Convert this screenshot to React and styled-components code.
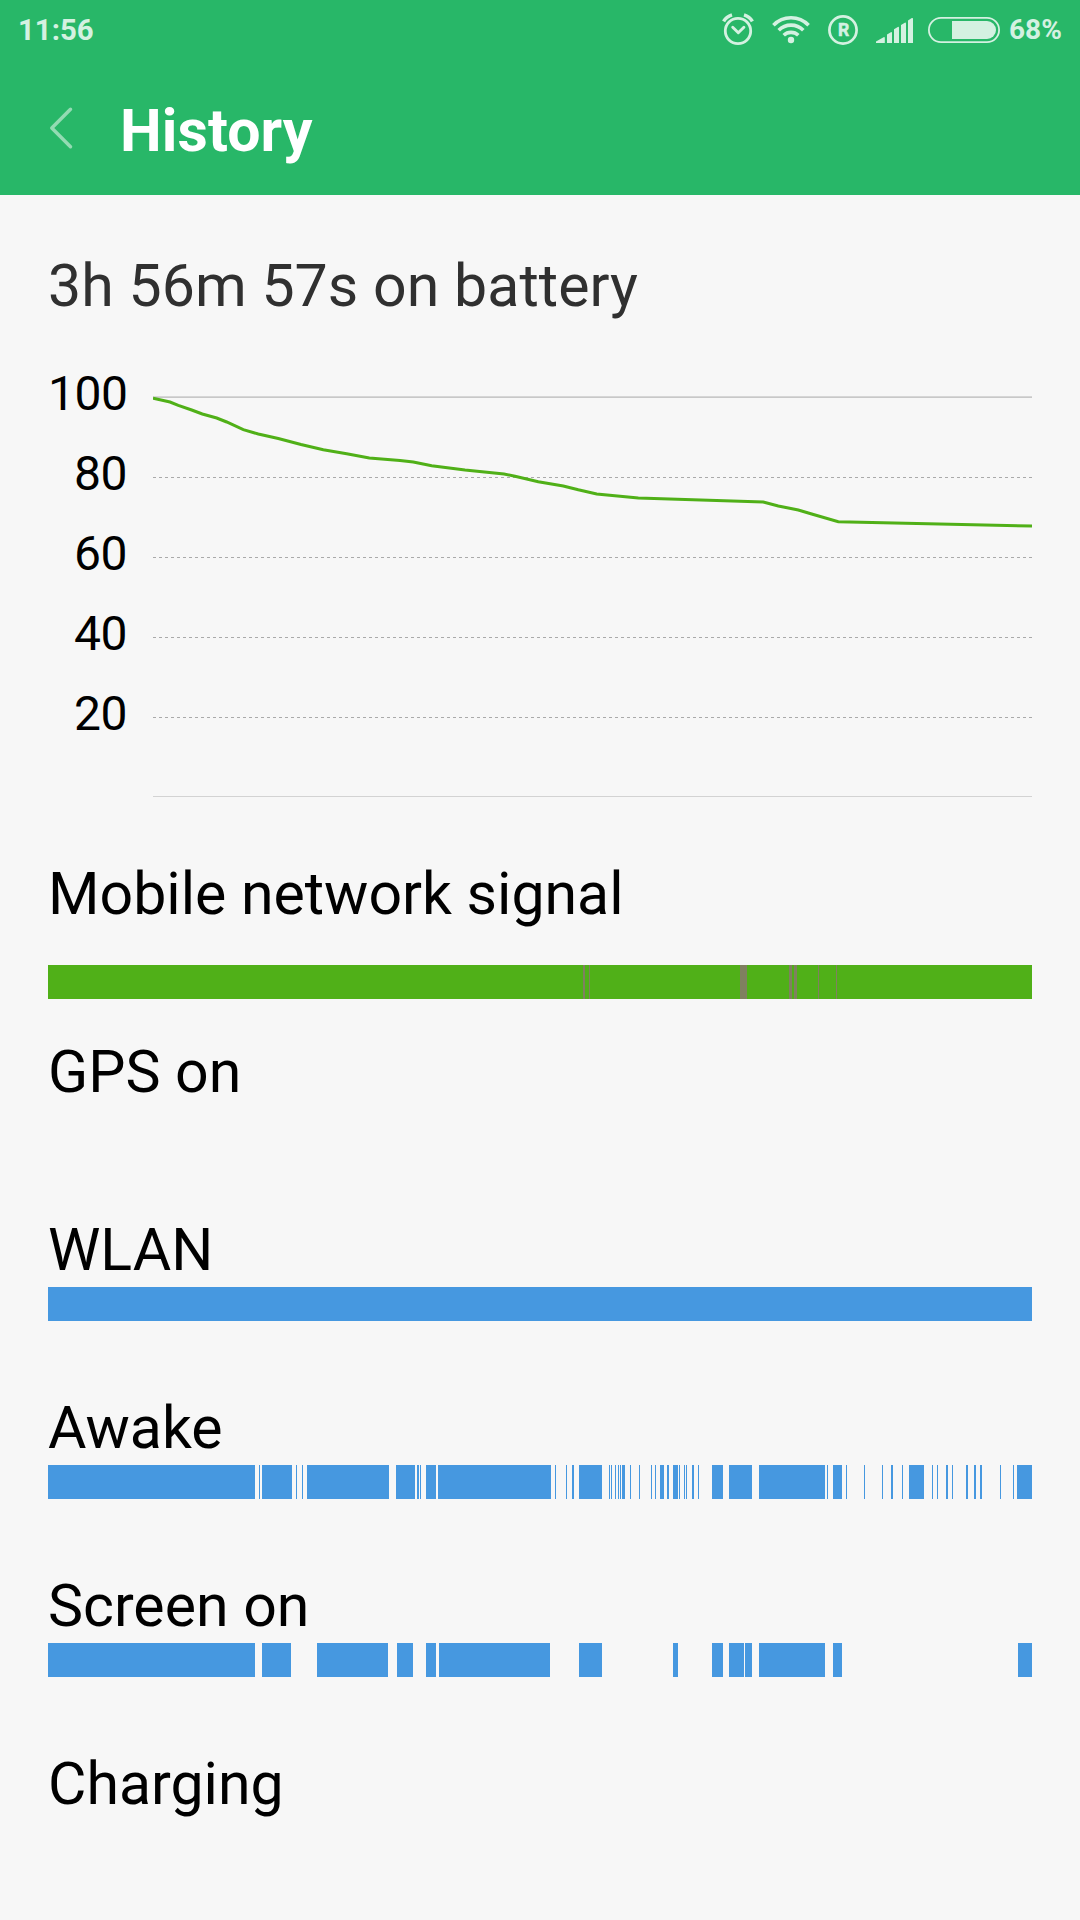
import React from 'react';
import styled, { createGlobalStyle } from 'styled-components';

const GlobalStyle = createGlobalStyle`
  html, body { margin: 0; padding: 0; background: #f7f7f7; }
  body { font-family: Roboto, "Noto Sans", sans-serif; }
`;

const Screen = styled.main`
  width: 1080px;
  height: 1920px;
  overflow: hidden;
  background: #f7f7f7;
  color: #000;
`;

const Header = styled.header`
  height: 195px;
  background: #28b768;
`;

const StatusBar = styled.div`
  height: 60px;
  box-sizing: border-box;
  padding: 0 19px 0 18px;
  display: flex;
  align-items: center;
  color: #d4f1e1;
  font-weight: 700;
  line-height: 60px;
`;

const Clock = styled.span`
  flex: 1;
  font-size: 29.4px;
`;

const Percentage = styled.span`
  flex: none;
  width: 52px;
  font-size: 28px;
  white-space: nowrap;
`;

const StatusIcon = styled.svg`
  display: block;
  flex: none;
  margin-right: ${(p) => p.$gap}px;
  font-family: Roboto, sans-serif;
  font-weight: 700;
`;

const TitleBar = styled.div`
  height: 135px;
  display: flex;
  align-items: flex-start;
  padding: 35px 0 0 48px;
  box-sizing: border-box;
`;

const BackButton = styled.button`
  border: 0;
  padding: 0;
  margin: 10px 45px 0 0;
  background: none;
  svg { display: block; }
`;

const Title = styled.h1`
  margin: 0;
  color: #fff;
  font-size: 59px;
  letter-spacing: 0.1px;
  line-height: 71px;
  font-weight: 700;
`;

const Content = styled.section`
  padding: 55px 48px 0;
`;

const Summary = styled.h2`
  margin: 0 0 33px;
  font-size: 59px;
  letter-spacing: 0.06px;
  line-height: 71px;
  font-weight: 400;
  color: #303030;
`;

const Chart = styled.div`
  display: flex;
  height: 446px;
  margin-bottom: 58px;
`;

const Axis = styled.div`
  width: 79px;
  margin-right: 26px;
  text-align: right;
`;

const AxisLabel = styled.div`
  font-size: 48px;
  letter-spacing: -0.5px;
  line-height: 80px;
  height: 80px;
`;

const Plot = styled.svg`
  display: block;
  margin-top: 40px;
`;

const Row = styled.div`
  height: 178px;
`;

const RowLabel = styled.div`
  font-size: 59px;
  line-height: 71px;
  white-space: nowrap;
`;

const Track = styled.div`
  display: flex;
  height: 34px;
  margin-top: ${(p) => p.$offset}px;
  background: ${(p) => p.$fill || 'transparent'};
`;

const Segment = styled.span`
  flex: none;
  height: 34px;
  background: ${(p) => p.$color};
`;

const BLUE = '#4698e0';
const GREEN = '#50b018';

const LEVELS = [
  [153, 398.2], [170, 402], [178.3, 405.3], [191.7, 410], [202.3, 414], [216.7, 418],
  [226.7, 422], [243.3, 429.7], [258.3, 434], [278.3, 438.5], [301, 444.5], [323.3, 449.8],
  [346.7, 453.7], [369.3, 457.9], [400, 460.5], [413.3, 462], [431.7, 465.8], [465, 470],
  [504, 474], [515, 476.3], [538.3, 481.8], [563.3, 486], [578.3, 489.8], [596.7, 494],
  [638.3, 497.9], [763.3, 502], [778.3, 506], [798.3, 510], [811.7, 514], [838.3, 521.8],
  [1032, 526],
];

const SIGNAL_GAPS = [
  [583, 585], [589, 590], [740, 747], [789, 792], [794, 797], [818, 819], [836, 837],
];

const AWAKE = [
  [48, 255], [259, 260], [262, 292], [296, 297], [302, 303], [307, 389], [396, 415],
  [417, 419], [420, 421], [426, 436], [438, 551], [555, 556], [566, 567], [572, 574],
  [579, 602], [609, 610], [611, 612], [615, 616], [618, 619], [620, 621], [622, 625],
  [630, 631], [639, 640], [651, 652], [655, 656], [660, 664], [667, 669], [673, 678],
  [679, 680], [684, 685], [686, 687], [692, 694], [698, 699], [712, 723], [729, 752],
  [759, 825], [827, 828], [833, 842], [846, 847], [864, 865], [882, 883], [891, 893],
  [902, 903], [909, 924], [932, 933], [937, 938], [946, 948], [952, 953], [966, 968],
  [974, 976], [980, 982], [1000, 1001], [1013, 1014], [1017, 1032],
];

const SCREEN_ON = [
  [48, 255], [262, 291], [317, 388], [397, 413], [426, 436], [439, 550], [579, 602],
  [673, 678], [712, 723], [729, 744], [745, 752], [759, 825], [833, 842], [1018, 1032],
];

const ROWS = [
  { label: 'Mobile network signal', offset: 36, fill: GREEN, color: '#808060', spans: SIGNAL_GAPS },
  { label: 'GPS on', offset: 2, spans: [] },
  { label: 'WLAN', offset: 2, color: BLUE, spans: [[48, 1032]] },
  { label: 'Awake', offset: 2, color: BLUE, spans: AWAKE },
  { label: 'Screen on', offset: 2, color: BLUE, spans: SCREEN_ON },
  { label: 'Charging', offset: 2, spans: [] },
];

function Timeline({ offset, fill, color, spans }) {
  return (
    <Track $offset={offset} $fill={fill}>
      {spans.map(([from, to], i) => (
        <Segment
          key={from}
          $color={color}
          style={{ width: to - from, marginLeft: from - (i ? spans[i - 1][1] : 48) }}
        />
      ))}
    </Track>
  );
}

function AlarmIcon() {
  return (
    <StatusIcon $gap={15} width="34" height="60" viewBox="721 0 34 60" fill="none" stroke="currentColor">
      <circle cx="738" cy="31" r="12.7" strokeWidth="2.8" />
      <path d="M732.7 27.2l5.6 5.6 5.6-5.6" strokeWidth="2.9" strokeLinecap="round" strokeLinejoin="round" />
      <path d="M723.6 21.4Q726.4 16.6 732 14.9M752.4 21.4Q749.6 16.6 744 14.9" strokeWidth="3.5" />
    </StatusIcon>
  );
}

function WifiIcon() {
  return (
    <StatusIcon $gap={16} width="42" height="60" viewBox="770 0 42 60" fill="none" stroke="currentColor" strokeWidth="3.6">
      <path d="M773.4 25.3A24.4 24.4 0 0 1 808.6 25.3" />
      <path d="M778.7 30.3A17.3 17.3 0 0 1 803.3 30.3" />
      <path d="M783.7 35.3A10.6 10.6 0 0 1 798.3 35.3" />
      <circle cx="791" cy="40" r="3.2" fill="currentColor" stroke="none" />
    </StatusIcon>
  );
}

function RoamingIcon() {
  return (
    <StatusIcon $gap={18} width="30" height="60" viewBox="828 0 30 60">
      <circle cx="843" cy="30" r="13.6" fill="none" stroke="currentColor" strokeWidth="2.7" />
      <text x="843.6" y="36" textAnchor="middle" fontSize="17.6" fill="currentColor" stroke="currentColor" strokeWidth="0.5">R</text>
    </StatusIcon>
  );
}

function SignalIcon() {
  return (
    <StatusIcon $gap={15} width="37" height="60" viewBox="876 0 37 60" fill="currentColor">
      <path d="M876 43v-1.6l7.6-4.2q1.2-.4 1.2.8v5z" />
      <path d="M887 43v-8.6l3.8-2.2q1.2-.5 1.2.7V43z" />
      <path d="M894 43V29.2l3.8-2.3q1.2-.5 1.2.7V43z" />
      <path d="M901 43V25l3.8-2.3q1.2-.5 1.2.7V43z" />
      <path d="M908 43V20.4l3.8-2.3q1.2-.5 1.2.7V43z" />
    </StatusIcon>
  );
}

function BatteryIcon() {
  return (
    <StatusIcon $gap={9} width="72" height="60" viewBox="928 0 72 60">
      <rect x="928.9" y="17.9" width="70.2" height="24.2" rx="12.1" fill="none" stroke="currentColor" strokeWidth="1.8" />
      <path d="M952 21h35a9 9 0 0 1 0 18h-35z" fill="currentColor" />
    </StatusIcon>
  );
}

function BatteryChart() {
  return (
    <Chart>
      <Axis>
        {[100, 80, 60, 40, 20].map((n) => (
          <AxisLabel key={n}>{n}</AxisLabel>
        ))}
      </Axis>
      <Plot width="879" height="406" viewBox="153 394 879 406">
        <rect x="153" y="396" width="879" height="1" fill="#d6d6d6" />
        <rect x="153" y="397" width="879" height="1" fill="#c8c8c8" />
        {[477.5, 557.5, 637.5, 717.5].map((y) => (
          <path key={y} d={`M153 ${y}H1032`} stroke="#aaa" strokeDasharray="3 3" />
        ))}
        <rect x="153" y="796" width="879" height="1" fill="#d3d3d3" />
        <polyline points={LEVELS.map((p) => p.join(',')).join(' ')} fill="none" stroke={GREEN} strokeWidth="3" />
      </Plot>
    </Chart>
  );
}

export default function App() {
  return (
    <Screen>
      <GlobalStyle />
      <Header>
        <StatusBar>
          <Clock>11:56</Clock>
          <AlarmIcon />
          <WifiIcon />
          <RoamingIcon />
          <SignalIcon />
          <BatteryIcon />
          <Percentage>68%</Percentage>
        </StatusBar>
        <TitleBar>
          <BackButton aria-label="Back">
            <svg width="27" height="48" viewBox="48 105 27 48" fill="none">
              <path d="M70.5 109.3L51.8 128L70.5 146.7" stroke="#93dbb3" strokeWidth="3.5" strokeLinecap="round" strokeLinejoin="round" />
            </svg>
          </BackButton>
          <Title>History</Title>
        </TitleBar>
      </Header>
      <Content>
        <Summary>3h 56m 57s on battery</Summary>
        <BatteryChart />
        {ROWS.map(({ label, ...timeline }) => (
          <Row key={label}>
            <RowLabel>{label}</RowLabel>
            <Timeline {...timeline} />
          </Row>
        ))}
      </Content>
    </Screen>
  );
}
